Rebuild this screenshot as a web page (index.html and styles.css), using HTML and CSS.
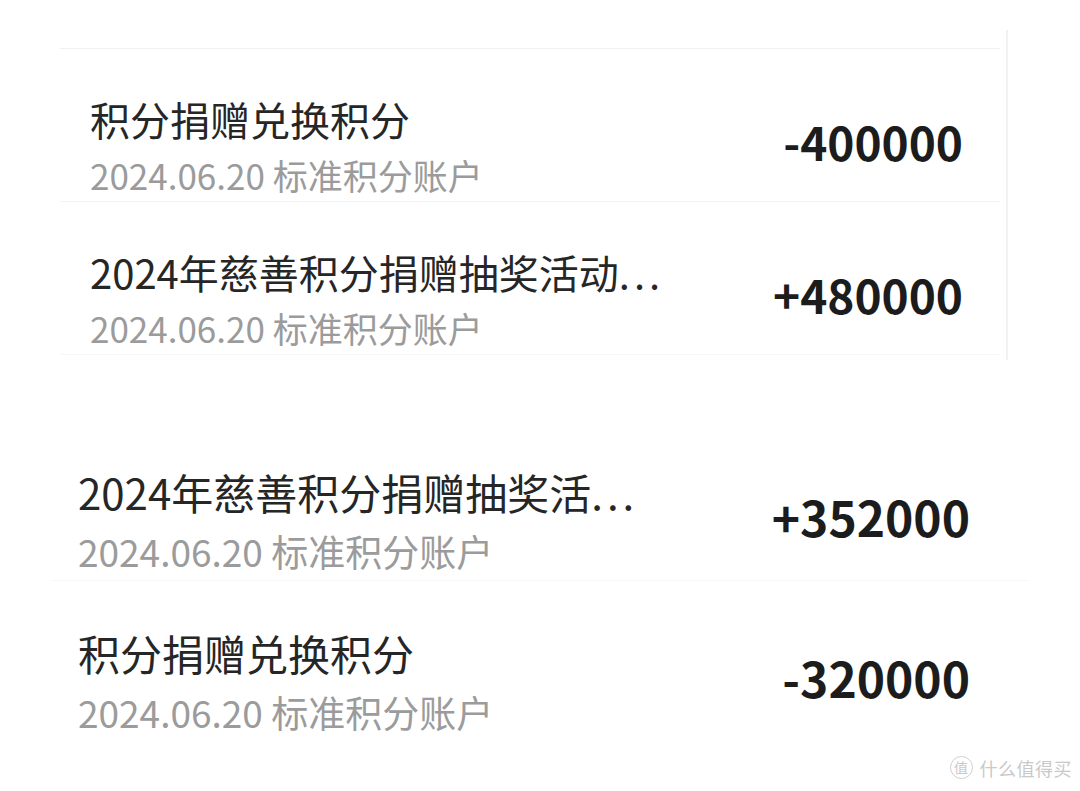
FILE: index.html
```html
<!DOCTYPE html>
<html lang="zh-CN">
<head>
<meta charset="utf-8">
<title>积分明细</title>
<link rel="stylesheet" href="styles.css">
</head>
<body>
<main class="page">
  <section class="panel panel-a">
    <div class="list">
      <div class="row">
        <div class="info">
          <div class="title">积分捐赠兑换积分</div>
          <div class="meta">2024.06.20 标准积分账户</div>
        </div>
        <div class="amount">-400000</div>
      </div>
      <div class="row row-last">
        <div class="info">
          <div class="title">2024年慈善积分捐赠抽奖活动<span class="dots">...</span></div>
          <div class="meta">2024.06.20 标准积分账户</div>
        </div>
        <div class="amount">+480000</div>
      </div>
    </div>
  </section>

  <section class="panel panel-b">
    <div class="row">
      <div class="info">
        <div class="title">2024年慈善积分捐赠抽奖活<span class="dots">...</span></div>
        <div class="meta">2024.06.20 标准积分账户</div>
      </div>
      <div class="amount">+352000</div>
    </div>
    <div class="row">
      <div class="info">
        <div class="title">积分捐赠兑换积分</div>
        <div class="meta">2024.06.20 标准积分账户</div>
      </div>
      <div class="amount">-320000</div>
    </div>
  </section>

  <div class="watermark">
    <span class="wm-badge">值</span>
    <span class="wm-text">什么值得买</span>
  </div>
</main>
</body>
</html>
```
FILE: styles.css
```css
html, body {
  margin: 0;
  padding: 0;
  background: #ffffff;
}

.page {
  position: relative;
  width: 1080px;
  height: 791px;
  overflow: hidden;
  font-family: "Noto Sans CJK SC", "Noto Sans", sans-serif;
  color: #262626;
}

/* upper card */
.panel-a {
  margin: 30px 0 0 60px;
  width: 948px;
  height: 330px;
  padding-top: 18px;
  box-sizing: border-box;
  border-right: 2px solid #f0f2f2;
}

.panel-a .list {
  border-top: 1px solid #f1f1f1;
  margin-right: 6px;
}

.row {
  display: flex;
  align-items: center;
  justify-content: space-between;
}

.panel-a .row {
  padding: 43px 37px 4px 30px;
  border-bottom: 1px solid #f3f3f3;
}

.panel-a .row-last {
  border-bottom-color: #f6f6f6;
}

.info {
  display: flex;
  flex-direction: column;
}

.title {
  white-space: nowrap;
}

.dots {
  letter-spacing: 4px;
}

.meta {
  white-space: nowrap;
  color: #9b9b9b;
}

.panel-a .title {
  font-size: 40px;
  line-height: 54px;
}

.panel-a .meta {
  font-size: 35px;
  line-height: 44px;
  margin-top: 7px;
}

.amount {
  font-family: "Noto Sans CJK SC", "Noto Sans", sans-serif;
  font-weight: 700;
  color: #1c1c1c;
  white-space: nowrap;
  margin-bottom: 7px;
}

.panel-a .amount {
  font-size: 46px;
  line-height: 56px;
}

/* lower card */
.panel-b {
  margin: 60px 0 0 50px;
  width: 980px;
}

.panel-b .row {
  padding: 44px 60px 6px 28px;
}

.panel-b .row:first-child {
  border-bottom: 1px solid #f8f8f8;
}

.panel-b .title {
  font-size: 42px;
  line-height: 56px;
}

.panel-b .meta {
  font-size: 37px;
  line-height: 46px;
  margin-top: 8px;
}

.panel-b .amount {
  font-size: 48px;
  line-height: 58px;
}

/* site mark in the corner */
.watermark {
  position: absolute;
  right: 8px;
  bottom: 12px;
  display: flex;
  align-items: center;
  gap: 7px;
  color: #c9c9c9;
}

.wm-badge {
  width: 21px;
  height: 21px;
  border: 1px solid #cfcfcf;
  border-radius: 50%;
  font-size: 14px;
  line-height: 21px;
  text-align: center;
}

.wm-text {
  font-size: 18px;
  line-height: 22px;
  letter-spacing: 0.5px;
}
```
